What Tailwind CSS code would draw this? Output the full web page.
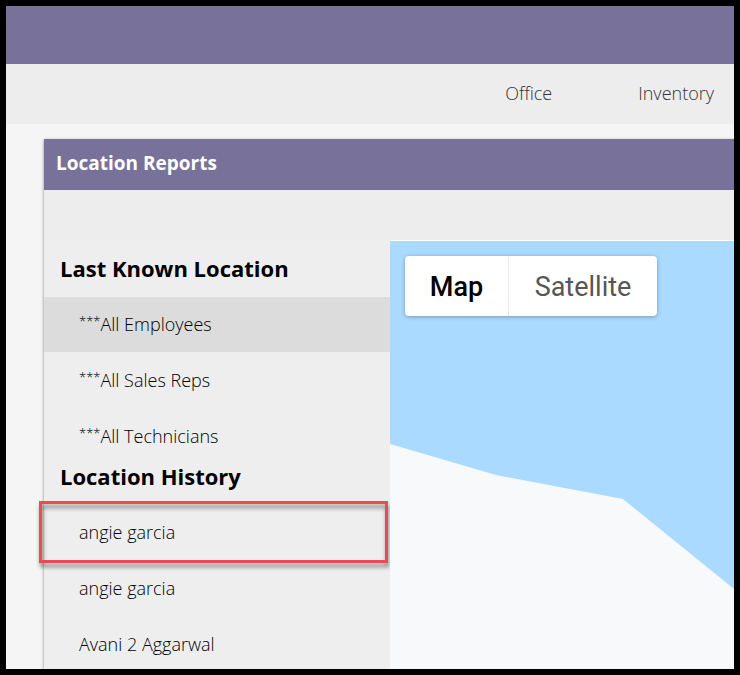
<!DOCTYPE html>
<html lang="en">
<head>
  <meta charset="UTF-8">
  <title>Location Reports</title>
  <meta name="viewport" content="width=device-width, initial-scale=1.0" />
  <script src="https://cdn.jsdelivr.net/npm/@tailwindcss/browser@4"></script>
</head>
<body class="h-screen overflow-hidden flex flex-col border-6 border-black bg-[#f5f5f5] font-['Open_Sans','Noto_Sans',sans-serif] text-black">

  <header class="h-[58px] shrink-0 bg-[#787199]"></header>

  <nav class="h-15 shrink-0 bg-[#ededed] flex items-center justify-end gap-[86px] pr-5 pb-0.5 text-lg font-light text-[#333]">
    <a href="#">Office</a>
    <a href="#">Inventory</a>
  </nav>

  <main class="flex-1 min-h-0 flex flex-col mt-[15px] ml-[38px] bg-[#eee] shadow-[0_1px_3px_rgba(0,0,0,0.45)]">
    <h1 class="h-[51px] shrink-0 flex items-center px-3 pb-0.5 bg-[#787199] text-white text-[19px] font-bold">Location Reports</h1>
    <div class="h-[51px] shrink-0 bg-[#ededed]"></div>

    <div class="flex-1 min-h-0 flex">
      <aside class="w-[346px] shrink-0 pt-3.5">
        <h2 class="px-4 pb-4 text-[22px] leading-[26px] font-bold">Last Known Location</h2>
        <ul class="flex flex-col gap-px text-lg font-light">
          <li><a href="#" class="h-[55px] flex items-center px-[35px] pb-0.5 bg-[#dcdcdc]"><span class="text-[13px] pb-1">***</span>All Employees</a></li>
          <li><a href="#" class="h-[55px] flex items-center px-[35px] pb-0.5"><span class="text-[13px] pb-1">***</span>All Sales Reps</a></li>
          <li><a href="#" class="h-[55px] flex items-center px-[35px] pb-0.5"><span class="text-[13px] pb-1">***</span>All Technicians</a></li>
        </ul>
        <h2 class="px-4 pb-4 text-[22px] leading-[26px] font-bold -mt-px">Location History</h2>
        <ul class="flex flex-col gap-px text-lg font-light">
          <li class="relative">
            <a href="#" class="h-[55px] flex items-center px-[35px] pb-0.5">angie garcia</a>
            <!-- highlight frame -->
            <span class="absolute -top-1 -bottom-[3px] -left-[5px] right-[2px] border-3 border-[#ee4a50] pointer-events-none drop-shadow-[1px_4px_2px_rgba(0,0,0,0.45)]"></span>
          </li>
          <li><a href="#" class="h-[55px] flex items-center px-[35px] pb-0.5">angie garcia</a></li>
          <li><a href="#" class="h-[55px] flex items-center px-[35px] pb-0.5">Avani 2 Aggarwal</a></li>
        </ul>
      </aside>

      <section class="relative flex-1 min-w-0 bg-[#f8f9fa] border-t border-white -mt-px overflow-hidden">
        <svg class="block w-full" viewBox="0 0 344 348" aria-hidden="true">
          <path d="M0 0H344V348L233 258L106 234L0 203Z" fill="#aadaff" />
        </svg>
        <div class="absolute top-[15px] left-[15px] h-15 flex rounded-sm bg-white shadow-[0_1px_4px_rgba(0,0,0,0.3)] font-[Roboto,sans-serif] text-[27px]">
          <button class="w-[103px] pt-0.5 font-medium text-black">Map</button>
          <button class="w-[149px] pt-0.5 border-l border-[#e6e6e6] text-[#565656]">Satellite</button>
        </div>
      </section>
    </div>
  </main>

</body>
</html>
